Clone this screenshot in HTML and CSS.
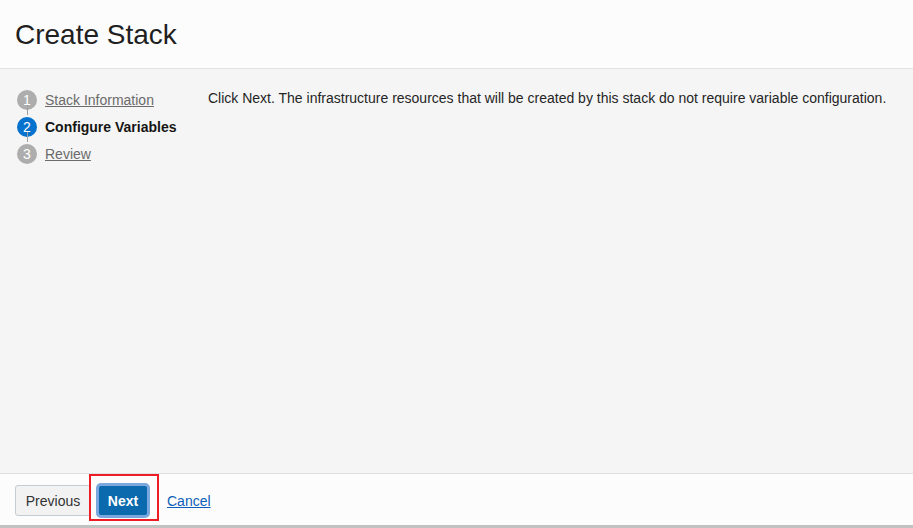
FILE: index.html
```html
<!DOCTYPE html>
<html>
<head>
<meta charset="utf-8">
<link rel="stylesheet" href="styles.css">
</head>
<body>
<div class="page">
  <header class="header"><h1 class="title">Create Stack</h1></header>
  <main class="main">
    <ol class="steps">
      <li class="step"><span class="num">1</span><a class="step-link" href="#">Stack Information</a></li>
      <li class="step active"><span class="num">2</span><span class="step-label">Configure Variables</span></li>
      <li class="step"><span class="num">3</span><a class="step-link" href="#">Review</a></li>
    </ol>
    <p class="message">Click Next. The infrastructure resources that will be created by this stack do not require variable configuration.</p>
  </main>
  <footer class="footer">
    <button class="btn btn-secondary">Previous</button>
    <span class="next-wrap"><button class="btn btn-primary">Next</button><span class="highlight"></span></span>
    <a class="cancel" href="#">Cancel</a>
  </footer>
</div>
</body>
</html>
```
FILE: styles.css
```css
* { box-sizing: border-box; }
html, body { margin: 0; padding: 0; }
body {
  width: 913px;
  height: 528px;
  font-family: "Liberation Sans", Arial, sans-serif;
  color: #161513;
  background: #fcfcfc;
  overflow: hidden;
}
.page {
  display: flex;
  flex-direction: column;
  height: 528px;
  border-bottom: 3px solid #c2c2c2;
}
.header {
  height: 69px;
  background: #fcfcfc;
  border-bottom: 1px solid #e3e3e3;
  padding: 19px 15px 0;
}
.title {
  margin: 0;
  font-weight: normal;
  font-size: 28px;
  line-height: 32px;
  color: #1f1f1f;
}
.main {
  flex: 1;
  background: #f5f5f5;
  display: flex;
  padding: 17px 0 0 17px;
}
.steps {
  list-style: none;
  margin: 0;
  padding: 0;
  width: 191px;
}
.step {
  position: relative;
  display: flex;
  align-items: center;
  height: 27px;
  font-size: 14px;
}
.step + .step::before {
  content: "";
  position: absolute;
  left: 10px;
  top: -8px;
  width: 1px;
  height: 10px;
  background: #9e9e9e;
}
.num {
  width: 20px;
  height: 20px;
  border-radius: 50%;
  background: #adadad;
  color: #fff;
  font-size: 14px;
  display: flex;
  align-items: center;
  justify-content: center;
  margin-right: 8px;
  flex-shrink: 0;
}
.active .num { background: #0572ce; }
.step-link { color: #6b6b6b; text-decoration: underline; }
.step-label { font-weight: bold; color: #161513; }
.message {
  margin: 0;
  padding-top: 4px;
  font-size: 14px;
  line-height: 16px;
  color: #252525;
}
.footer {
  height: 52px;
  background: #fcfcfc;
  border-top: 1px solid #e0e0e0;
  display: flex;
  align-items: center;
  padding: 2px 15px 0;
}
.btn {
  font-family: "Liberation Sans", Arial, sans-serif;
  font-size: 14px;
  height: 31px;
  border-radius: 3px;
  cursor: pointer;
}
.btn-secondary {
  width: 76px;
  background: #f2f2f2;
  border: 1px solid #c4ccd4;
  color: #333;
}
.next-wrap {
  position: relative;
  margin-left: 5px;
  display: inline-flex;
}
.btn-primary {
  width: 54px;
  height: 35px;
  background: #0a6aad;
  color: #fff;
  border: 3px solid #7aa7dd;
  border-radius: 5px;
  font-weight: bold;
  font-size: 14px;
}
.highlight {
  position: absolute;
  left: -7px;
  top: -9px;
  width: 70px;
  height: 47px;
  border: 2px solid #ee1c25;
}
.cancel {
  margin-left: 17px;
  color: #0b5fb8;
  font-size: 14px;
  text-decoration: underline;
}
```
